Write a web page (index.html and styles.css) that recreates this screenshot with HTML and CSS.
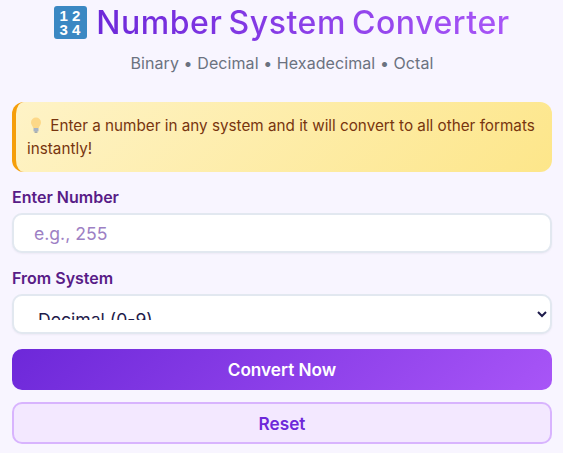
FILE: index.html
```html
<!DOCTYPE html>
<html lang="en">
<head>
<meta charset="utf-8">
<title>Number System Converter</title>
<link rel="stylesheet" href="styles.css">
</head>
<body>
<main class="page">
  <header class="head">
    <h1 class="title">
      <svg class="keycap" viewBox="0 0 33 33" aria-hidden="true">
        <rect width="33" height="33" rx="3" fill="#3b88c3"/>
        <g class="keycap-digits">
          <text x="10" y="15">1</text><text x="22.500" y="15">2</text>
          <text x="10" y="29">3</text><text x="22.500" y="29">4</text>
        </g>
      </svg>
      <span class="title-text">Number System Converter</span>
    </h1>
    <p class="sub">Binary • Decimal • Hexadecimal • Octal</p>
  </header>
  <div class="tip">
    <svg class="bulb" viewBox="0 0 12 16" aria-hidden="true">
      <path d="M6 0.5a5 5 0 0 0-5 5c0 2.200 1.600 3.200 2.200 5.500h5.600c.6-2.300 2.200-3.300 2.200-5.500a5 5 0 0 0-5-5z" fill="#fdd888"/>
      <rect x="3.500" y="11" width="5" height="3.500" rx=".6" fill="#a9b4c4"/>
      <rect x="4.500" y="14.500" width="3" height="1.200" rx=".5" fill="#8a96a8"/>
    </svg>
    Enter a number in any system and it will convert to all other formats instantly!
  </div>
  <div class="field">
    <label class="label" for="num">Enter Number</label>
    <input class="control" id="num" type="text" placeholder="e.g., 255">
  </div>
  <div class="field">
    <label class="label" for="sys">From System</label>
    <select class="control select" id="sys">
      <option>Decimal (0-9)</option>
      <option>Binary (0-1)</option>
      <option>Hexadecimal (0-F)</option>
      <option>Octal (0-7)</option>
    </select>
  </div>
  <button class="btn primary" type="button">Convert Now</button>
  <button class="btn secondary" type="button">Reset</button>
</main>
</body>
</html>
```

FILE: styles.css
```css
* { box-sizing: border-box; }
html, body { margin: 0; height: 453px; overflow: hidden; }
body {
  background: #f8f5ff;
  font-family: Inter, "Liberation Sans", sans-serif;
}
.page { padding: 0 11px 0 12px; }
.head { text-align: center; }
.title {
  margin: 0;
  height: 46px;
  display: flex;
  align-items: center;
  justify-content: center;
  gap: 9px;
  font-size: 32px;
  font-weight: 550;
  line-height: 46px;
  letter-spacing: .55px;
  word-spacing: -3px;
}
.keycap { width: 33px; height: 33px; flex: none; margin-top: -1px; }
.keycap-digits text {
  fill: #fff;
  font-family: "Liberation Sans", sans-serif;
  font-size: 15px;
  font-weight: 700;
  text-anchor: middle;
}
.title-text {
  background: linear-gradient(90deg, #6d28d9, #a855f7);
  -webkit-background-clip: text;
  background-clip: text;
  color: transparent;
}
.sub {
  margin: 7px 0 0;
  color: #6b7280;
  font-size: 16px;
  line-height: 20px;
  letter-spacing: .08px;
}
.tip {
  margin-top: 29px;
  height: 70px;
  padding: 12px 12px 0 11px;
  border-left: 4px solid #f59e0b;
  border-radius: 12px;
  background: linear-gradient(135deg, #fef3c7, #fde68a);
  color: #78350f;
  font-size: 15.250px;
  line-height: 23px;
}
.bulb { width: 12px; height: 16px; margin: 0 4px -2px 3px; }
.field { margin-top: 16px; }
.field + .field { margin-top: 16px; }
.label {
  display: block;
  margin-bottom: 6px;
  color: #581c87;
  font-size: 16px;
  font-weight: 600;
  line-height: 19px;
}
.control {
  display: block;
  width: 100%;
  height: 40px;
  border: 2px solid #e2e8f0;
  border-radius: 10px;
  background: #fff;
  box-shadow: 0 1px 2px rgba(30, 27, 75, .05);
  font-family: inherit;
  font-size: 17.600px;
  padding: 0 20px;
  color: #1e1b4b;
  outline: none;
}
.control::placeholder { color: #9d80c4; opacity: 1; }
.select { padding: 12px 20px; }
.btn {
  display: block;
  width: 100%;
  height: 41px;
  border-radius: 10px;
  font-family: inherit;
  font-size: 17.200px;
  font-weight: 600;
}
.primary {
  margin-top: 15px;
  border: 0;
  background: linear-gradient(135deg, #6d28d9, #a855f7);
  color: #fff;
}
.secondary {
  margin-top: 12px;
  height: 42px;
  border: 2px solid #d8b4fe;
  background: #f3e8ff;
  color: #6d28d9;
}
```
